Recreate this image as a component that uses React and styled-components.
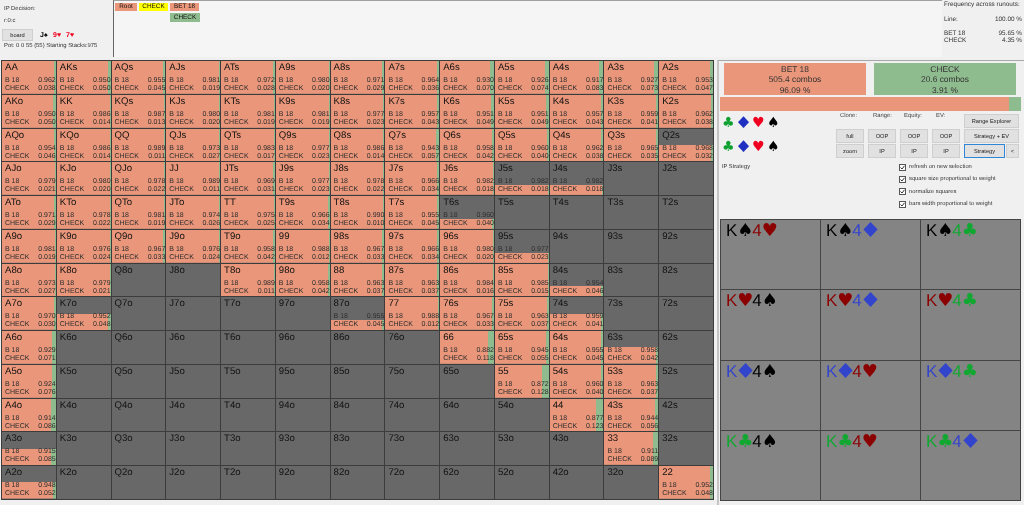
import React from 'react'
import styled, { createGlobalStyle } from 'styled-components'

const SALMON = '#e9967a'
const GREEN = '#8fbc8f'
const GREY = '#686868'

const GlobalStyle = createGlobalStyle`
 html, body {
  margin: 0;
  padding: 0;
  background: #f0f0f0;
  font-family: 'Liberation Sans', Arial, sans-serif;
  text-rendering: geometricPrecision;
  overflow: hidden;
 }
`

// name bet weight, check is 1000 - bet, no bet means the hand is not in range
const HANDS = [
 'AA 962|AKs 950|AQs 955|AJs 981|ATs 972|A9s 980|A8s 971|A7s 964|A6s 930|A5s 926|A4s 917|A3s 927|A2s 953',
 'AKo 950|KK 986|KQs 987|KJs 980|KTs 981|K9s 981|K8s 977|K7s 957|K6s 951|K5s 951|K4s 957|K3s 959|K2s 962',
 'AQo 954|KQo 986|QQ 989|QJs 973|QTs 983|Q9s 977|Q8s 986|Q7s 943|Q6s 958|Q5s 960|Q4s 962|Q3s 965|Q2s 968 50',
 'AJo 979|KJo 980|QJo 978|JJ 989|JTs 969|J9s 977|J8s 978|J7s 966|J6s 982|J5s 982 30|J4s 982 30|J3s|J2s',
 'ATo 971|KTo 978|QTo 981|JTo 974|TT 975|T9s 966|T8s 990|T7s 955|T6s 960 30|T5s|T4s|T3s|T2s',
 'A9o 981|K9o 976|Q9o 967|J9o 976|T9o 958|99 988|98s 967|97s 966|96s 980|95s 977 30|94s|93s|92s',
 'A8o 973|K8o 979|Q8o|J8o|T8o 989|98o 958|88 963|87s 963|86s 984|85s 985|84s 954 33|83s|82s',
 'A7o 970|K7o 952 50|Q7o|J7o|T7o|97o|87o 955 32|77 988|76s 967|75s 963|74s 959 50|73s|72s',
 'A6o 929|K6o|Q6o|J6o|T6o|96o|86o|76o|66 882|65s 945|64s 955|63s 958 50|62s',
 'A5o 924|K5o|Q5o|J5o|T5o|95o|85o|75o|65o|55 872|54s 960|53s 963|52s',
 'A4o 914|K4o|Q4o|J4o|T4o|94o|84o|74o|64o|54o|44 877|43s 944|42s',
 'A3o 915 50|K3o|Q3o|J3o|T3o|93o|83o|73o|63o|53o|43o|33 911|32s',
 'A2o 948 50|K2o|Q2o|J2o|T2o|92o|82o|72o|62o|52o|42o|32o|22 952',
]

const SUITS = {
 s: { glyph: '♠', color: '#000000' },
 h: { glyph: '♥', color: '#8b0000' },
 d: { glyph: '♦', color: '#3344cc', wide: true },
 c: { glyph: '♣', color: '#10a830' },
}

const COMBOS = ['sh', 'sd', 'sc', 'hs', 'hd', 'hc', 'ds', 'dh', 'dc', 'cs', 'ch', 'cd']

const Page = styled.div`
 width: 1024px;
 height: 505px;
 background: #f0f0f0;
 color: #222;
 overflow: hidden;
 filter: blur(0.3px);
`

const Top = styled.div`
 display: flex;
 height: 57px;
 margin-bottom: 3px;
`

const Decision = styled.div`
 width: 113px;
 padding: 3px 0 0 4px;
 box-sizing: border-box;
 font-size: 5.9px;
 color: #333;
`

const InfoLine = styled.div`
 height: 12px;
 line-height: 12px;
 white-space: nowrap;
`

const BoardRow = styled.div`
 display: flex;
 align-items: center;
 margin: 2px 0 -1px -2px;
 height: 12px;
`

const BoardCard = styled.span`
 margin-left: ${p => p.$first ? '7px' : '5px'};
 width: 8px;
 font-size: 7px;
 font-weight: bold;
 color: ${p => p.$color};
`

const Tree = styled.div`
 flex: 1;
 display: flex;
 gap: 2px;
 align-items: flex-start;
 padding: 2px 0 0 1px;
 background: #f5f5f5;
 border-left: 1px solid #666;
 border-top: 1px solid #a0a0a0;
`

const TreeColumn = styled.div`
 display: flex;
 flex-direction: column;
 gap: 2px;
`

const TreeNode = styled.div`
 width: ${p => p.$width}px;
 height: ${p => p.$tall ? 9 : 8}px;
 line-height: ${p => p.$tall ? 9 : 8}px;
 font-size: 6.4px;
 text-align: center;
 color: #111;
 background: ${p => p.$color};
`

const Frequency = styled.div`
 width: 82px;
 padding: 1px 2px 0 2px;
 box-sizing: border-box;
 font-size: 6.4px;
 color: #333;
`

const FrequencyRow = styled.div`
 display: flex;
 justify-content: space-between;
 height: 7px;
 line-height: 7px;
 margin-top: ${p => p.$gap || 0}px;
`

const Body = styled.div`
 display: flex;
`

const Matrix = styled.div`
 margin-left: 1px;
 width: 713px;
 height: 440px;
 display: grid;
 grid-template-columns: repeat(13, 1fr);
 grid-template-rows: repeat(13, 1fr);
 border-top: 1px solid #3c3c3c;
 border-left: 1px solid #3c3c3c;
 box-sizing: border-box;
`

const Cell = styled.div`
 min-width: 0;
 min-height: 0;
 overflow: hidden;
 border-right: 1px solid #3c3c3c;
 border-bottom: 1px solid #3c3c3c;
 background-color: ${GREY};
 background-image: linear-gradient(to right, ${SALMON} ${p => p.$bet}%, ${GREEN} ${p => p.$bet}%);
 background-repeat: no-repeat;
 background-position: left bottom;
 background-size: 100% ${p => p.$weight}%;
`

const HandName = styled.div`
 height: 16px;
 line-height: 14px;
 padding-left: 3px;
 font-size: 9.6px;
 color: #111;
`

const HandRow = styled.div`
 display: flex;
 justify-content: space-between;
 height: 8px;
 line-height: 8px;
 padding: 0 0 0 3px;
 font-size: 7px;
 color: #2e2e2e;
`

const Side = styled.div`
 margin-left: 3px;
 width: 307px;
 height: 445px;
 box-sizing: border-box;
 padding: 2px 0 0 1px;
 border-left: 2px solid #c4c4c4;
 border-top: 1px solid #a8a8a8;
`

const ActionRow = styled.div`
 display: flex;
 gap: 8px;
 padding-left: 4px;
`

const ActionBox = styled.div`
 width: 142px;
 height: 32px;
 padding-top: 1px;
 box-sizing: border-box;
 font-size: 8.4px;
 line-height: 10.4px;
 text-align: center;
 color: #333;
 background: ${p => p.$color};
`

const RatioBar = styled.div`
 display: flex;
 width: 301px;
 height: 14px;
 margin-top: 2px;
`

const RatioPart = styled.div`
 background: ${p => p.$color};
`

const Controls = styled.div`
 display: flex;
 height: 48px;
`

const SuitColumn = styled.div`
 width: 116px;
 padding: 5px 0 0 2px;
 box-sizing: border-box;
 display: flex;
 flex-direction: column;
 gap: 10px;
`

const SuitRow = styled.div`
 display: flex;
 gap: 4px;
 height: 14px;
`

const Suit = styled.span`
 width: 11px;
 text-align: center;
 font-family: 'DejaVu Sans', sans-serif;
 font-size: 14px;
 line-height: 14px;
 color: ${p => p.$color};
 transform: ${p => p.$wide ? 'scale(1.4, 1.15)' : 'none'};
`

const ButtonColumn = styled.div`
 width: 28px;
 margin-right: 4px;
 display: flex;
 flex-direction: column;
 gap: 1px;
`

const ColumnLabel = styled.div`
 height: 17px;
 line-height: 10px;
 font-size: 5.9px;
 color: #444;
 padding-left: ${p => p.$indent || 0}px;
`

const Button = styled.button`
 width: ${p => p.$width || 28}px;
 height: ${p => p.$height || 14}px;
 flex: none;
 padding: 0;
 margin: 0;
 box-sizing: border-box;
 font-family: inherit;
 font-size: 5.7px;
 color: #222;
 background: #e1e1e1;
 border: ${p => p.$active ? '1px solid #2f86d6' : '1px solid #cfcfcf'};
`

const ExplorerColumn = styled.div`
 margin-top: 3px;
 display: flex;
 flex-direction: column;
 gap: 1px;
`

const ExplorerRow = styled.div`
 display: flex;
 gap: 1px;
`

const Options = styled.div`
 display: flex;
 height: 60px;
 padding: 4px 0 0 2px;
 box-sizing: border-box;
`

const StrategyLabel = styled.div`
 width: 177px;
 font-size: 5.7px;
 line-height: 9px;
 color: #333;
`

const OptionList = styled.div`
 display: flex;
 flex-direction: column;
 gap: 4.4px;
`

const Option = styled.div`
 display: flex;
 align-items: center;
 gap: 3px;
 height: 8px;
 font-size: 5.8px;
 color: #333;
`

const Box = styled.svg`
 width: 7px;
 height: 7px;
 flex: none;
`

const ComboGrid = styled.div`
 width: 301px;
 height: 282px;
 display: grid;
 grid-template-columns: 100px 100px 100px;
 grid-template-rows: 70px 71px 70px 1fr;
 box-sizing: border-box;
 background: #848484;
 border-top: 1px solid #444;
 border-left: 1px solid #444;
`

const ComboCell = styled.div`
 border-right: 1px solid #444;
 border-bottom: 1px solid #444;
 padding: 0 0 0 5px;
 font-size: 17px;
 line-height: 22px;
 white-space: nowrap;
`

const ComboPart = styled.span`
 color: ${p => p.$color};
`

const ComboSuit = styled.span`
 display: inline-block;
 width: 14px;
 margin-right: 1px;
 text-align: center;
 font-family: 'DejaVu Sans', sans-serif;
 font-size: 18px;
 transform: ${p => p.$wide ? 'scale(1.4, 1.15)' : 'none'};
`

const CheckOption = ({ label }) => (
 <Option>
  <Box viewBox="0 0 7 7">
   <rect x="0.5" y="0.5" width="6" height="6" fill="#fff" stroke="#555" />
   <polyline points="1.5,3.5 3,5 5.5,1.8" fill="none" stroke="#333" />
  </Box>
  {label}
 </Option>
)

const Hand = ({ spec }) => {
 const [name, bet, weight] = spec.split(' ')
 if (!bet) {
  return (
   <Cell $bet={0} $weight={0}>
    <HandName>{name}</HandName>
   </Cell>
  )
 }
 const check = 1000 - Number(bet)
 return (
  <Cell $bet={Number(bet) / 10} $weight={weight || 100}>
   <HandName>{name}</HandName>
   <HandRow>
    <span>B 18</span>
    <span>0.{bet}</span>
   </HandRow>
   <HandRow>
    <span>CHECK</span>
    <span>0.{String(check).padStart(3, '0')}</span>
   </HandRow>
  </Cell>
 )
}

const Combo = ({ suits }) => {
 const first = SUITS[suits[0]]
 const second = SUITS[suits[1]]
 return (
  <ComboCell>
   <ComboPart $color={first.color}>K<ComboSuit $wide={first.wide}>{first.glyph}</ComboSuit></ComboPart>
   <ComboPart $color={second.color}>4<ComboSuit $wide={second.wide}>{second.glyph}</ComboSuit></ComboPart>
  </ComboCell>
 )
}

const SuitPicker = () => (
 <SuitRow>
  <Suit $color="#10a030">♣</Suit>
  <Suit $color="#2030c0" $wide>♦</Suit>
  <Suit $color="#f00020">♥</Suit>
  <Suit $color="#000">♠</Suit>
 </SuitRow>
)

export default function App() {
 return (
  <Page>
   <GlobalStyle />
   <Top>
    <Decision>
     <InfoLine>IP Decision:</InfoLine>
     <InfoLine>r:0:c</InfoLine>
     <BoardRow>
      <Button $width={31} $height={12}>board</Button>
      <BoardCard $first $color="#000">J♠</BoardCard>
      <BoardCard $color="#f00020">9♥</BoardCard>
      <BoardCard $color="#f00020">7♥</BoardCard>
     </BoardRow>
     <InfoLine>Pot: 0 0 55 (55) Starting Stacks:975</InfoLine>
    </Decision>
    <Tree>
     <TreeColumn>
      <TreeNode $width={22} $color={SALMON}>Root</TreeNode>
     </TreeColumn>
     <TreeColumn>
      <TreeNode $width={29} $color="#ffff00">CHECK</TreeNode>
     </TreeColumn>
     <TreeColumn>
      <TreeNode $width={29} $color={SALMON}>BET 18</TreeNode>
      <TreeNode $width={30} $tall $color={GREEN}>CHECK</TreeNode>
     </TreeColumn>
    </Tree>
    <Frequency>
     <FrequencyRow>Frequency across runouts:</FrequencyRow>
     <FrequencyRow $gap={8}><span>Line:</span><span>100.00 %</span></FrequencyRow>
     <FrequencyRow $gap={7}><span>BET 18</span><span>95.65 %</span></FrequencyRow>
     <FrequencyRow><span>CHECK</span><span>4.35 %</span></FrequencyRow>
    </Frequency>
   </Top>
   <Body>
    <Matrix>
     {HANDS.flatMap(row => row.split('|')).map(spec => (
      <Hand key={spec} spec={spec} />
     ))}
    </Matrix>
    <Side>
     <ActionRow>
      <ActionBox $color={SALMON}>BET 18<br />505.4 combos<br />96.09 %</ActionBox>
      <ActionBox $color={GREEN}>CHECK<br />20.6 combos<br />3.91 %</ActionBox>
     </ActionRow>
     <RatioBar>
      <RatioPart $color={SALMON} style={{ width: '96.09%' }} />
      <RatioPart $color={GREEN} style={{ width: '3.91%' }} />
     </RatioBar>
     <Controls>
      <SuitColumn>
       <SuitPicker />
       <SuitPicker />
      </SuitColumn>
      <ButtonColumn>
       <ColumnLabel $indent={4}>Clone:</ColumnLabel>
       <Button>full</Button>
       <Button>zoom</Button>
      </ButtonColumn>
      <ButtonColumn>
       <ColumnLabel $indent={5}>Range:</ColumnLabel>
       <Button>OOP</Button>
       <Button>IP</Button>
      </ButtonColumn>
      <ButtonColumn>
       <ColumnLabel $indent={4}>Equity:</ColumnLabel>
       <Button>OOP</Button>
       <Button>IP</Button>
      </ButtonColumn>
      <ButtonColumn>
       <ColumnLabel $indent={4}>EV:</ColumnLabel>
       <Button>OOP</Button>
       <Button>IP</Button>
      </ButtonColumn>
      <ExplorerColumn>
       <Button $width={55}>Range Explorer</Button>
       <Button $width={55}>Strategy + EV</Button>
       <ExplorerRow>
        <Button $width={41} $active>Strategy</Button>
        <Button $width={13}>&lt;</Button>
       </ExplorerRow>
      </ExplorerColumn>
     </Controls>
     <Options>
      <StrategyLabel>IP Strategy</StrategyLabel>
      <OptionList>
       <CheckOption label="refresh on new selection" />
       <CheckOption label="square size proportional to weight" />
       <CheckOption label="normalize squares" />
       <CheckOption label="bars width proportional to weight" />
      </OptionList>
     </Options>
     <ComboGrid>
      {COMBOS.map(suits => <Combo key={suits} suits={suits} />)}
     </ComboGrid>
    </Side>
   </Body>
  </Page>
 )
}
